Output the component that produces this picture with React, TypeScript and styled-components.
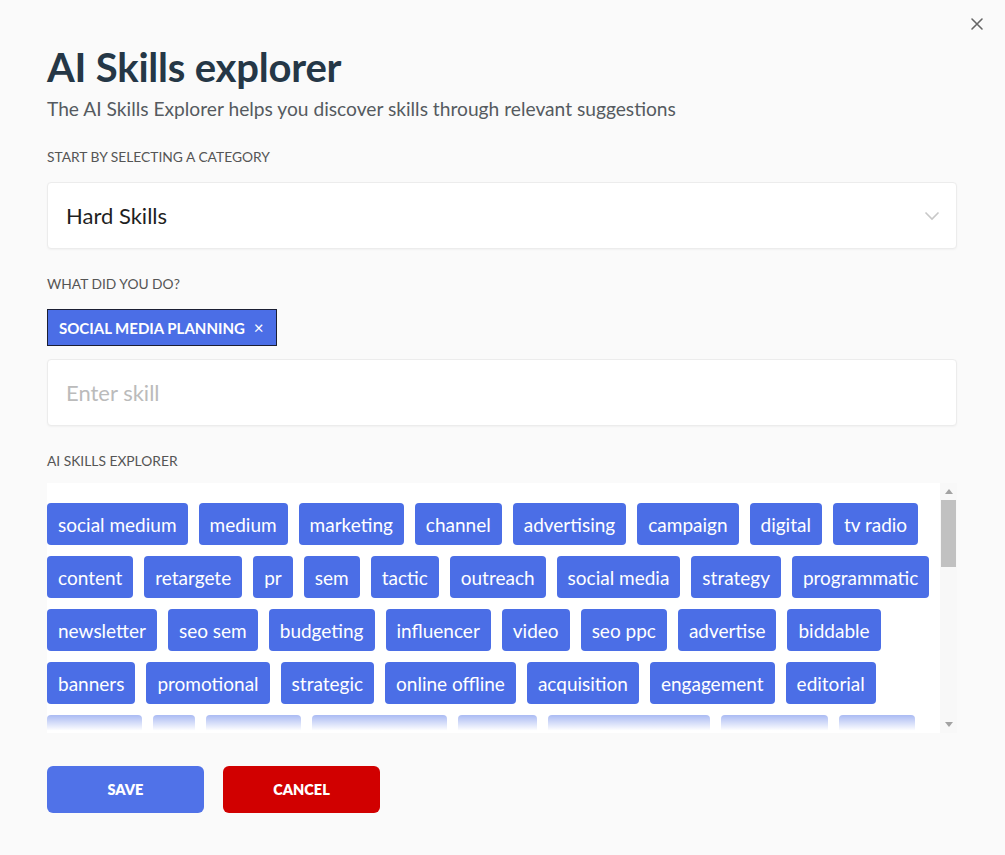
import React from "react";
import styled, { createGlobalStyle } from "styled-components";

const Global = createGlobalStyle`
  html, body { margin: 0; padding: 0; background: #fafafa; }
  body { font-family: "Lato", "Open Sans", sans-serif; color: #253746; }
  * { box-sizing: border-box; }
`;

const Page = styled.div`
  width: 1005px;
  height: 855px;
  background: #fafafa;
  padding: 40px 48px 0 47px;
  position: relative;
`;

const Close = styled.button`
  position: absolute;
  top: 14px;
  right: 18px;
  width: 20px;
  height: 20px;
  border: 0;
  background: none;
  padding: 0;
  cursor: pointer;
  display: flex;
  align-items: center;
  justify-content: center;
`;

const Title = styled.h1`
  margin: 0;
  font-size: 40px;
  line-height: 54px;
  font-weight: 700;
  color: #253746;
  letter-spacing: -0.2px;
`;

const Subtitle = styled.p`
  margin: 2px 0 0;
  font-size: 19.2px;
  line-height: 26px;
  color: #555a60;
`;

const Label = styled.div<{ $top: number }>`
  margin-top: ${(p) => p.$top}px;
  font-size: 13.8px;
  line-height: 18px;
  color: #555;
  text-transform: uppercase;
`;

const Field = styled.div`
  height: 67px;
  background: #fff;
  border: 1px solid #ececec;
  border-radius: 4px;
  box-shadow: 0 1px 2px rgba(0, 0, 0, 0.04);
  display: flex;
  align-items: center;
  justify-content: space-between;
  padding: 0 16px 0 18px;
  font-size: 22px;
`;

const SelectField = styled(Field)`
  margin-top: 16px;
  color: #1f1f1f;
`;

const InputField = styled(Field)`
  margin-top: 13px;
  color: #bbb;
`;

const TagRow = styled.div`
  margin-top: 16px;
  display: flex;
`;

const Tag = styled.div`
  height: 37px;
  display: inline-flex;
  align-items: center;
  gap: 9px;
  padding: 0 12px 0 11px;
  background: #4b6ee6;
  border: 1px solid #1b1f33;
  color: #fff;
  font-size: 15px;
  font-weight: 700;
  text-transform: uppercase;
`;

const TagX = styled.span`
  font-weight: 400;
  font-size: 17px;
  line-height: 1;
`;

const ExplorerBox = styled.div`
  margin-top: 13px;
  height: 250px;
  background: #fff;
  display: flex;
`;

const ChipViewport = styled.div`
  flex: 1;
  overflow: hidden;
  padding-top: 20px;
  position: relative;
  &::after {
    content: "";
    position: absolute;
    left: 0;
    right: 0;
    bottom: 0;
    height: 24px;
    background: linear-gradient(to bottom, rgba(255, 255, 255, 0.35), #fff 90%);
    pointer-events: none;
  }
`;

const Chips = styled.div`
  display: flex;
  flex-wrap: wrap;
  gap: 11px 11px;
`;

const Chip = styled.span`
  height: 42px;
  display: inline-flex;
  align-items: center;
  padding: 0 11px;
  background: #4b6ee6;
  color: #fff;
  border-radius: 4px;
  font-size: 19px;
`;

const ScrollTrack = styled.div`
  width: 17px;
  background: #f8f8f8;
  display: flex;
  flex-direction: column;
  align-items: center;
  padding: 0 1px;
`;

const ScrollArrow = styled.div`
  height: 17px;
  width: 100%;
  display: flex;
  align-items: center;
  justify-content: center;
`;

const ScrollThumb = styled.div`
  width: 100%;
  height: 67px;
  background: #c1c1c1;
  margin-bottom: auto;
`;

const Actions = styled.div`
  margin-top: 33px;
  display: flex;
  gap: 19px;
`;

const Button = styled.button<{ $variant: "save" | "cancel" }>`
  width: 157px;
  height: 47px;
  border: 0;
  border-radius: 6px;
  background: ${(p) => (p.$variant === "save" ? "#5072e8" : "#d10000")};
  color: #fff;
  font-family: inherit;
  font-size: 14.5px;
  font-weight: 800;
  text-transform: uppercase;
  cursor: pointer;
`;

const skills = [
  "social medium", "medium", "marketing", "channel", "advertising", "campaign", "digital", "tv radio",
  "content", "retargete", "pr", "sem", "tactic", "outreach", "social media", "strategy", "programmatic",
  "newsletter", "seo sem", "budgeting", "influencer", "video", "seo ppc", "advertise", "biddable",
  "banners", "promotional", "strategic", "online offline", "acquisition", "engagement", "editorial",
  "branding", "ad", "analytics", "cross channel", "display", "brand awareness", "publishing", "search",
  "email", "paid search", "copywriting", "media buying", "events", "sponsorship", "seo",
];

const Arrow = ({ down }: { down?: boolean }) => (
  <svg width="8" height="5" viewBox="0 0 8 5">
    <path d={down ? "M0 0 H8 L4 5 Z" : "M0 5 H8 L4 0 Z"} fill="#a3a3a3" />
  </svg>
);

export default function App() {
  return (
    <>
      <Global />
      <Page>
        <Close aria-label="close">
          <svg width="14" height="14" viewBox="0 0 14 14">
            <path d="M2 2 L12 12 M12 2 L2 12" stroke="#666" strokeWidth="1.6" strokeLinecap="round" />
          </svg>
        </Close>
        <Title>AI Skills explorer</Title>
        <Subtitle>The AI Skills Explorer helps you discover skills through relevant suggestions</Subtitle>
        <Label $top={26}>Start by selecting a category</Label>
        <SelectField>
          <span>Hard Skills</span>
          <svg width="16" height="10" viewBox="0 0 16 10">
            <path d="M1.5 1.5 L8 8 L14.5 1.5" fill="none" stroke="#c8c8c8" strokeWidth="1.6" />
          </svg>
        </SelectField>
        <Label $top={26}>What did you do?</Label>
        <TagRow>
          <Tag>
            Social media planning <TagX>×</TagX>
          </Tag>
        </TagRow>
        <InputField>Enter skill</InputField>
        <Label $top={26}>AI skills explorer</Label>
        <ExplorerBox>
          <ChipViewport>
            <Chips>
              {skills.map((s) => (
                <Chip key={s}>{s}</Chip>
              ))}
            </Chips>
          </ChipViewport>
          <ScrollTrack>
            <ScrollArrow>
              <Arrow />
            </ScrollArrow>
            <ScrollThumb />
            <ScrollArrow>
              <Arrow down />
            </ScrollArrow>
          </ScrollTrack>
        </ExplorerBox>
        <Actions>
          <Button $variant="save">Save</Button>
          <Button $variant="cancel">Cancel</Button>
        </Actions>
      </Page>
    </>
  );
}
